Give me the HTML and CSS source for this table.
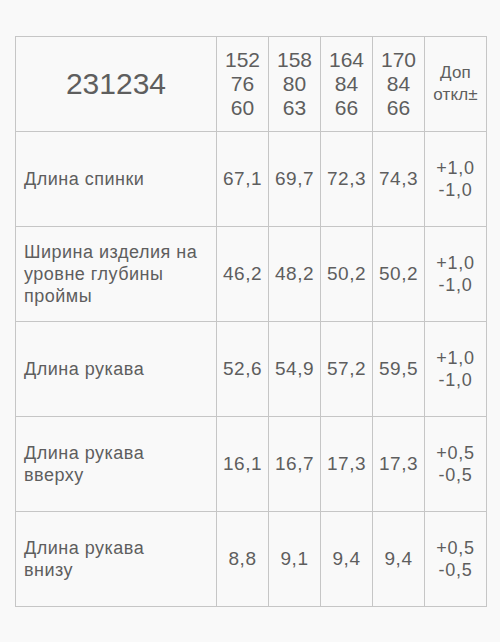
FILE: index.html
```html
<!DOCTYPE html>
<html lang="ru">
<head>
<meta charset="utf-8">
<link rel="stylesheet" href="styles.css">
</head>
<body>
<div class="page">
<table class="sizes">
  <colgroup>
    <col class="c-name">
    <col class="c-num">
    <col class="c-num">
    <col class="c-num">
    <col class="c-num">
    <col class="c-tol">
  </colgroup>
  <tr>
    <td class="model">231234</td>
    <td class="size">152<br>76<br>60</td>
    <td class="size">158<br>80<br>63</td>
    <td class="size">164<br>84<br>66</td>
    <td class="size">170<br>84<br>66</td>
    <td class="tolhead">Доп<br>откл±</td>
  </tr>
  <tr>
    <td class="name">Длина спинки</td>
    <td class="num">67,1</td><td class="num">69,7</td><td class="num">72,3</td><td class="num">74,3</td>
    <td class="tol">+1,0<br>-1,0</td>
  </tr>
  <tr>
    <td class="name">Ширина изделия на уровне глубины проймы</td>
    <td class="num">46,2</td><td class="num">48,2</td><td class="num">50,2</td><td class="num">50,2</td>
    <td class="tol">+1,0<br>-1,0</td>
  </tr>
  <tr>
    <td class="name">Длина рукава</td>
    <td class="num">52,6</td><td class="num">54,9</td><td class="num">57,2</td><td class="num">59,5</td>
    <td class="tol">+1,0<br>-1,0</td>
  </tr>
  <tr>
    <td class="name">Длина рукава<br>вверху</td>
    <td class="num">16,1</td><td class="num">16,7</td><td class="num">17,3</td><td class="num">17,3</td>
    <td class="tol">+0,5<br>-0,5</td>
  </tr>
  <tr>
    <td class="name">Длина рукава<br>внизу</td>
    <td class="num">8,8</td><td class="num">9,1</td><td class="num">9,4</td><td class="num">9,4</td>
    <td class="tol">+0,5<br>-0,5</td>
  </tr>
</table>
</div>
</body>
</html>
```

FILE: styles.css
```css
html, body {
  margin: 0;
  padding: 0;
  background: #f9f9f9;
}
body {
  font-family: "Liberation Sans", Arial, sans-serif;
  color: #5e5e5e;
}
.page {
  padding: 36px 15px 0 15px;
}
.sizes {
  border-collapse: collapse;
  table-layout: fixed;
  width: 471px;
}
.c-name { width: 201px; }
.c-num { width: 52px; }
.c-tol { width: 62px; }
.sizes td {
  border: 1px solid #c6c6c6;
  height: 94px;
  padding: 0;
  text-align: center;
  vertical-align: middle;
}
.model {
  font-size: 30px;
}
.size {
  font-size: 21px;
  line-height: 24px;
}
.tolhead {
  font-size: 17px;
  line-height: 22px;
  letter-spacing: 0.2px;
}
.sizes td.name {
  text-align: left;
  padding: 0 15px 0 8px;
  font-size: 18px;
  line-height: 22px;
  letter-spacing: 0.5px;
}
.num {
  font-size: 19px;
  letter-spacing: 0.5px;
}
.tol {
  font-size: 18px;
  line-height: 22px;
  letter-spacing: 0.8px;
}
```
